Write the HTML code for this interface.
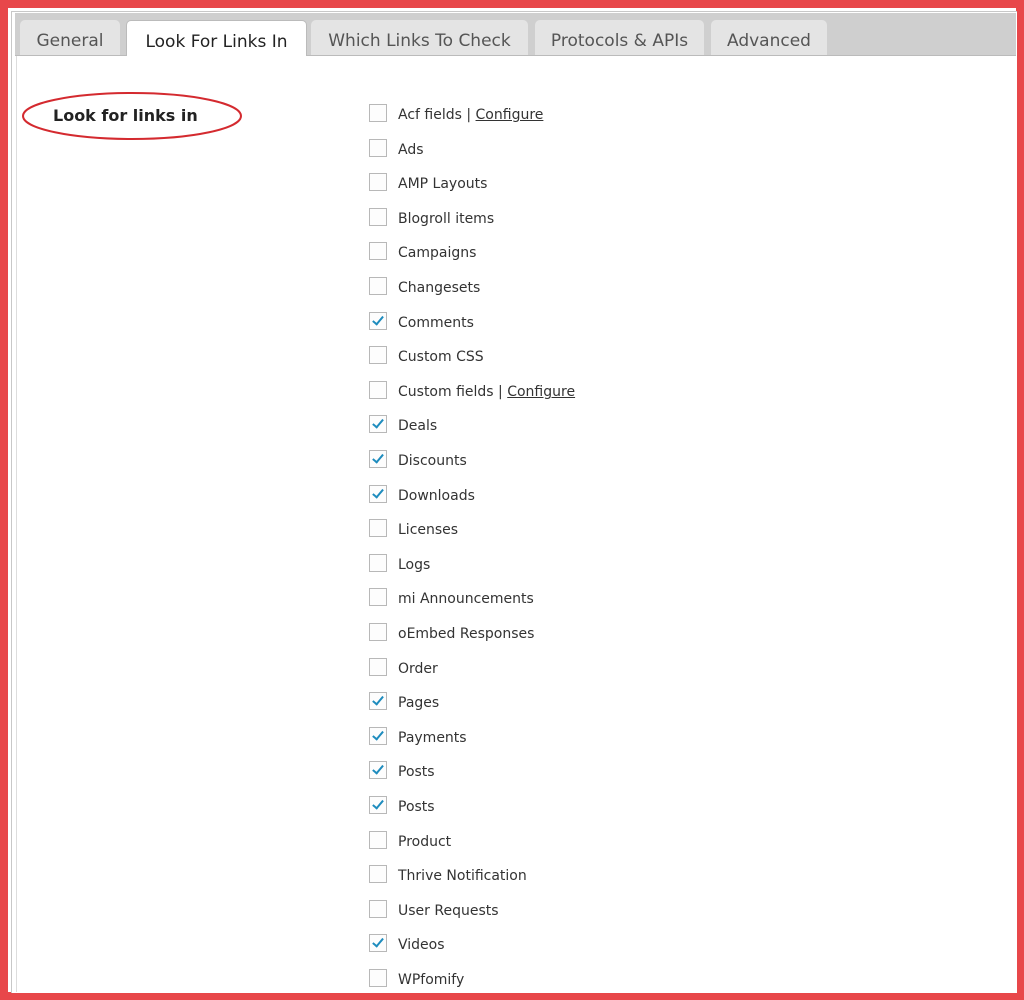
<!DOCTYPE html><html><head><style>
body{margin:0;width:1024px;height:1000px;background:#e8474a;position:relative;overflow:hidden;font-family:"DejaVu Sans",Verdana,sans-serif}
.frame{position:absolute;left:8px;top:8px;width:1008px;height:984px;background:#fff}
.frame2{position:absolute;left:11px;top:11px;width:1005px;height:981px;border-left:1px solid #c8c8c8;border-top:1px solid #c8c8c8;background:#fff}
.bar{position:absolute;left:15px;top:13px;width:1001px;height:42px;background:#cfcfcf;border-bottom:1px solid #bbb}
.content{position:absolute;left:16px;top:56px;width:1000px;height:936px;background:#fff;border-left:1px solid #ddd}
.tab{position:absolute;top:20px;height:35px;background:#e4e4e4;border-radius:5px 5px 0 0;color:#555;font-size:17px;line-height:42px;text-align:center}
.tab.a{background:#fff;color:#222;height:36px;border:1px solid #bbb;border-bottom:none}
.row{position:absolute;left:369px;height:20px;font-size:14px;color:#333;line-height:20px}
.cb{position:absolute;left:0;top:0px;width:16px;height:16px;border:1px solid #b8b8b8;background:#fdfdfd}
.cb.c::after{content:"";position:absolute;left:5px;top:1px;width:4px;height:9px;border:solid #1e8cbe;border-width:0 2.5px 2.5px 0;transform:rotate(40deg)}
.t{position:absolute;left:29px;top:1px;white-space:nowrap}
u{text-decoration:underline}
</style></head><body>
<div class="frame"></div><div class="frame2"></div>
<div class="bar"></div>
<div class="tab" style="left:20px;width:100px">General</div>
<div class="tab a" style="left:126px;width:179px">Look For Links In</div>
<div class="tab" style="left:311px;width:217px">Which Links To Check</div>
<div class="tab" style="left:535px;width:169px">Protocols &amp; APIs</div>
<div class="tab" style="left:711px;width:116px">Advanced</div>
<div class="content"></div>
<div style="position:absolute;left:53px;top:106px;font-size:16px;font-weight:bold;color:#222">Look for links in</div>
<svg style="position:absolute;left:0;top:0" width="260" height="150"><ellipse cx="132" cy="116" rx="109" ry="23" fill="none" stroke="#d42a2f" stroke-width="2"/></svg>
<div id="rows"></div>
<script>
var items=[["Acf fields | <u>Configure</u>",0],["Ads",0],["AMP Layouts",0],["Blogroll items",0],["Campaigns",0],["Changesets",0],["Comments",1],["Custom CSS",0],["Custom fields | <u>Configure</u>",0],["Deals",1],["Discounts",1],["Downloads",1],["Licenses",0],["Logs",0],["mi Announcements",0],["oEmbed Responses",0],["Order",0],["Pages",1],["Payments",1],["Posts",1],["Posts",1],["Product",0],["Thrive Notification",0],["User Requests",0],["Videos",1],["WPfomify",0]];
var h="";items.forEach(function(it,i){var y=Math.round(104+i*34.6);h+='<div class="row" style="top:'+y+'px"><div class="cb'+(it[1]?' c':'')+'"></div><div class="t">'+it[0]+'</div></div>';});
document.getElementById("rows").innerHTML=h;
</script>
</body></html>
